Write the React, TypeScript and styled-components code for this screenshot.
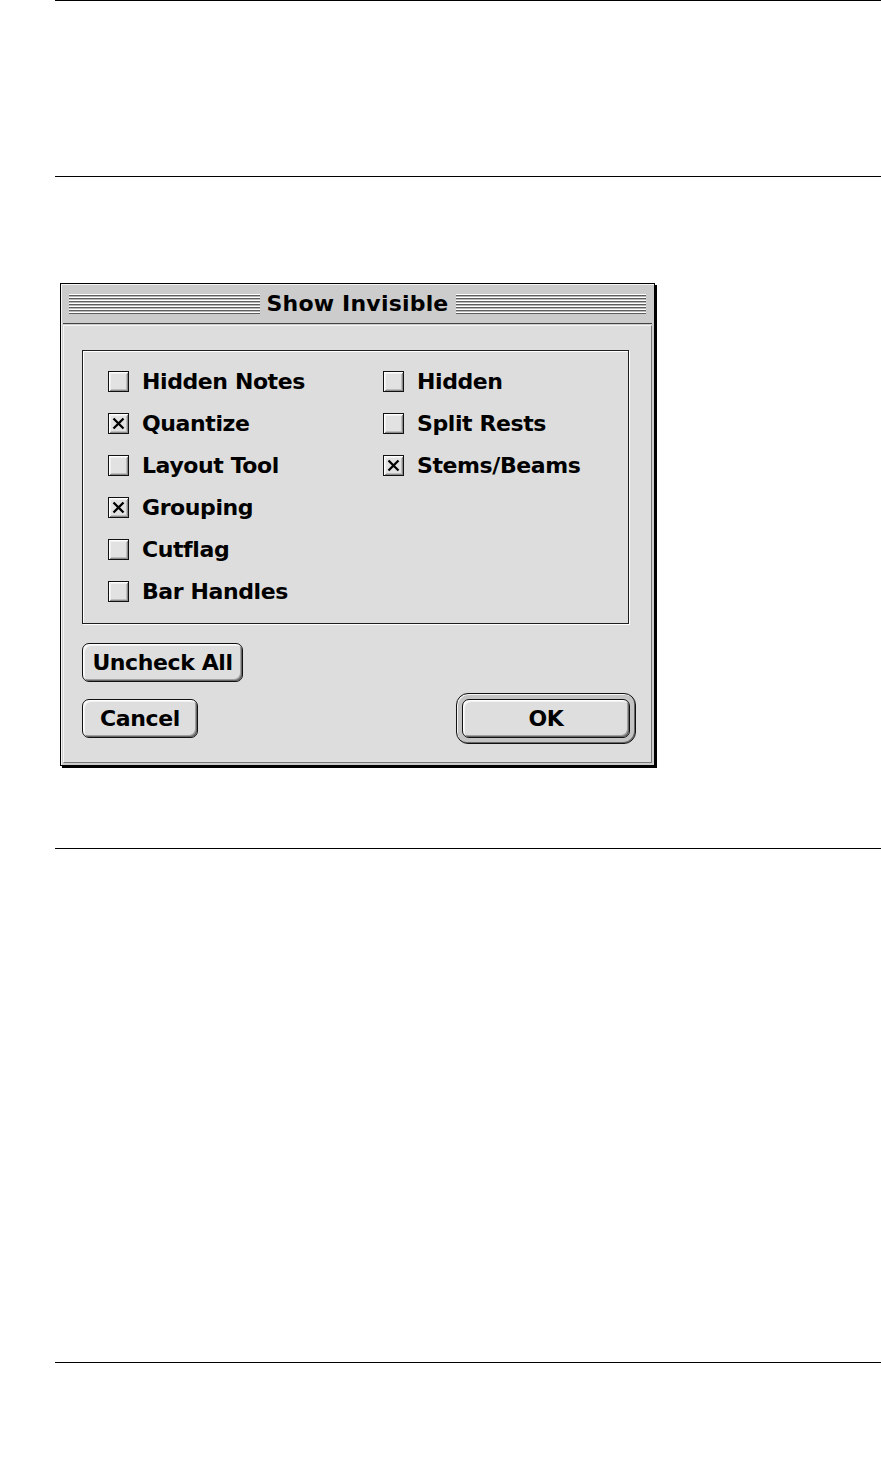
import styled, { createGlobalStyle } from 'styled-components'

const GlobalStyle = createGlobalStyle`
  html, body {
    margin: 0;
    padding: 0;
    background: #fff;
  }
  body {
    font-family: "DejaVu Sans", "Liberation Sans", sans-serif;
    color: #000;
  }
`

const Page = styled.div`
  width: 881px;
`

const Section = styled.section<{ $height: number }>`
  box-sizing: border-box;
  margin-left: 55px;
  height: ${(p) => p.$height}px;
  border-top: 1px solid #000;
`

const DialogSection = styled(Section)`
  padding: 106px 0 0 5px;
`

const Window = styled.div`
  box-sizing: border-box;
  width: 595px;
  border: 1px solid #000;
  box-shadow: 2px 2px 0 #000, inset 1px 1px 0 #f4f4f4;
  background: #cccccc;
  padding: 0 2px 2px;
`

const TitleBar = styled.div`
  display: flex;
  align-items: center;
  height: 39px;
  padding: 0 6px 0 6px;
  border-bottom: 1px solid #444;
`

const Stripes = styled.span`
  flex: 1;
  height: 20px;
  background: repeating-linear-gradient(
    to bottom,
    #ffffff 0 1px,
    #5e5e5e 1px 2px,
    #b8b8b8 2px 3px
  );
`

const Title = styled.span`
  padding: 0 7px;
  font-size: 22px;
  font-weight: bold;
  line-height: 1;
  letter-spacing: 0.2px;
`

const Content = styled.div`
  box-sizing: border-box;
  margin-top: 1px;
  background: #dddddd;
  border-top: 1px solid #f4f4f4;
  border-left: 1px solid #f4f4f4;
  border-right: 1px solid #777;
  border-bottom: 1px solid #777;
  padding: 24px 15px 18px 18px;
`

const GroupBox = styled.div`
  box-sizing: border-box;
  width: 547px;
  height: 274px;
  border: 1px solid #1e1e1e;
  box-shadow: inset 1px 1px 0 #ffffff, 1px 1px 0 #ffffff;
  display: flex;
  padding: 9px 0 11px 25px;
`

const Column = styled.div<{ $width?: number }>`
  display: flex;
  flex-direction: column;
  flex: ${(p) => (p.$width ? `0 0 ${p.$width}px` : '1')};
`

const Row = styled.label`
  display: flex;
  align-items: center;
  height: 42px;
  gap: 13px;
  font-size: 22px;
  font-weight: bold;
  letter-spacing: -0.4px;
`

const Box = styled.span`
  box-sizing: border-box;
  display: inline-flex;
  align-items: center;
  justify-content: center;
  width: 21px;
  height: 21px;
  border: 1px solid #111;
  background: #e2e2e2;
  box-shadow: inset 1px 1px 0 #ffffff, inset -1px -1px 0 #8a8a8a,
    inset 2px 2px 0 #f0f0f0, inset -2px -2px 0 #bdbdbd;
`

const ButtonRow = styled.div<{ $spread?: boolean }>`
  display: flex;
  align-items: center;
  justify-content: ${(p) => (p.$spread ? 'space-between' : 'flex-start')};
  margin-top: ${(p) => (p.$spread ? 11 : 19)}px;
`

const Button = styled.button<{ $width: number }>`
  box-sizing: border-box;
  width: ${(p) => p.$width}px;
  height: 39px;
  padding: 0 6px;
  border: 1px solid #111;
  border-radius: 7px;
  background: #dedede;
  box-shadow: inset 1px 1px 0 #ffffff, inset 2px 2px 0 #f2f2f2,
    inset -1px -1px 0 #666, inset -2px -2px 0 #a0a0a0;
  font-family: "DejaVu Sans", "Liberation Sans", sans-serif;
  font-size: 22px;
  font-weight: bold;
  color: #000;
  line-height: 1;
  letter-spacing: -0.4px;
`

const DefaultRing = styled.span`
  display: inline-flex;
  padding: 5px;
  border: 1px solid #111;
  border-radius: 12px;
  background: #c4c4c4;
  box-shadow: inset 1px 1px 0 #f4f4f4, inset -1px -1px 0 #666;
`

function CheckBox({ label, checked }: { label: string; checked?: boolean }) {
  return (
    <Row>
      <Box>
        {checked && (
          <svg width="13" height="13" viewBox="0 0 13 13">
            <path d="M1.5 1.5 L11.5 11.5 M11.5 1.5 L1.5 11.5" stroke="#000" strokeWidth="2.3" />
          </svg>
        )}
      </Box>
      {label}
    </Row>
  )
}

export default function App() {
  return (
    <Page>
      <GlobalStyle />
      <Section $height={176} />
      <DialogSection $height={672}>
        <Window>
          <TitleBar>
            <Stripes />
            <Title>Show Invisible</Title>
            <Stripes />
          </TitleBar>
          <Content>
            <GroupBox>
              <Column $width={275}>
                <CheckBox label="Hidden Notes" />
                <CheckBox label="Quantize" checked />
                <CheckBox label="Layout Tool" />
                <CheckBox label="Grouping" checked />
                <CheckBox label="Cutflag" />
                <CheckBox label="Bar Handles" />
              </Column>
              <Column>
                <CheckBox label="Hidden" />
                <CheckBox label="Split Rests" />
                <CheckBox label="Stems/Beams" checked />
              </Column>
            </GroupBox>
            <ButtonRow>
              <Button $width={161}>Uncheck All</Button>
            </ButtonRow>
            <ButtonRow $spread>
              <Button $width={116}>Cancel</Button>
              <DefaultRing>
                <Button $width={168}>OK</Button>
              </DefaultRing>
            </ButtonRow>
          </Content>
        </Window>
      </DialogSection>
      <Section $height={514} />
      <Section $height={109} />
    </Page>
  )
}
